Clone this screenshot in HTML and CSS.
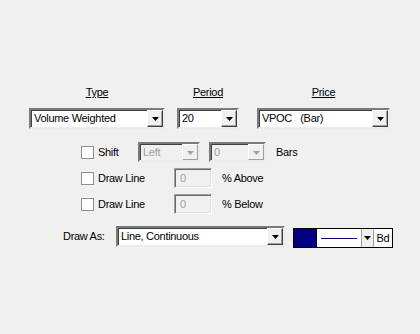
FILE: index.html
```html
<!DOCTYPE html>
<html>
<head>
<meta charset="utf-8">
<link rel="stylesheet" href="styles.css">
</head>
<body>
<div class="panel">
  <div class="top">
    <div class="col col-type">
      <div class="head">Type</div>
      <div class="combo w-type"><span class="val">Volume Weighted</span><span class="btn"><svg width="7" height="4" viewBox="0 0 7 4"><path d="M0 0H7L3.5 4Z" fill="#000"/></svg></span></div>
    </div>
    <div class="col col-period">
      <div class="head">Period</div>
      <div class="combo w-period"><span class="val">20</span><span class="btn"><svg width="7" height="4" viewBox="0 0 7 4"><path d="M0 0H7L3.5 4Z" fill="#000"/></svg></span></div>
    </div>
    <div class="col col-price">
      <div class="head">Price</div>
      <div class="combo w-price"><span class="val">VPOC&nbsp;&nbsp;&nbsp;(Bar)</span><span class="btn"><svg width="7" height="4" viewBox="0 0 7 4"><path d="M0 0H7L3.5 4Z" fill="#000"/></svg></span></div>
    </div>
  </div>

  <div class="row row-shift">
    <label class="chk w-shift"><span class="box"></span><span>Shift</span></label>
    <div class="combo small disabled w-left"><span class="val">Left</span><span class="btn"><svg width="7" height="4" viewBox="0 0 7 4"><path d="M0 0H7L3.5 4Z" fill="#a0a0a0"/></svg></span></div>
    <div class="combo small disabled w-zero"><span class="val">0</span><span class="btn"><svg width="7" height="4" viewBox="0 0 7 4"><path d="M0 0H7L3.5 4Z" fill="#a0a0a0"/></svg></span></div>
    <span class="txt">Bars</span>
  </div>

  <div class="row row-line1">
    <label class="chk w-line"><span class="box"></span><span>Draw Line</span></label>
    <div class="edit">0</div>
    <span class="txt">% Above</span>
  </div>

  <div class="row row-line2">
    <label class="chk w-line"><span class="box"></span><span>Draw Line</span></label>
    <div class="edit">0</div>
    <span class="txt">% Below</span>
  </div>

  <div class="row row-draw">
    <span class="txt w-drawas">Draw As:</span>
    <div class="combo w-draw"><span class="val">Line, Continuous</span><span class="btn"><svg width="7" height="4" viewBox="0 0 7 4"><path d="M0 0H7L3.5 4Z" fill="#000"/></svg></span></div>
    <div class="style">
      <span class="swatch"></span>
      <span class="linebox"><span class="ln"></span></span>
      <span class="sbtn"><svg width="7" height="4" viewBox="0 0 7 4"><path d="M0 0H7L3.5 4Z" fill="#000"/></svg></span>
      <span class="bd">Bd</span>
    </div>
  </div>
</div>
</body>
</html>
```

FILE: styles.css
```css
html, body {
  margin: 0;
  padding: 0;
}
body {
  width: 420px;
  height: 334px;
  background: #f0f0f0;
  font-family: "Liberation Sans", Arial, sans-serif;
  font-size: 11px;
  letter-spacing: -0.3px;
  color: #000;
  overflow: hidden;
}
.panel {
  padding-top: 86px;
}
.top {
  display: flex;
  padding-left: 29px;
}
.col {
  display: flex;
  flex-direction: column;
  align-items: center;
}
.col-period { margin-left: 12px; }
.col-price { margin-left: 18px; }
.head {
  height: 13px;
  line-height: 13px;
  text-decoration: underline;
  margin-bottom: 9px;
}
.combo {
  box-sizing: border-box;
  height: 21px;
  background: #fff;
  border-style: solid;
  border-width: 2px;
  border-color: #7a7a7a #ececec #ececec #7a7a7a;
  box-shadow: inset 1px 1px 0 #404040;
  display: flex;
  align-items: stretch;
  position: relative;
}
.combo .val {
  flex: 1;
  padding-left: 3px;
  line-height: 16px;
  white-space: nowrap;
  overflow: hidden;
}
.combo .btn {
  box-sizing: border-box;
  width: 16px;
  background: #f0f0f0;
  border-style: solid;
  border-width: 1px;
  border-color: #ffffff #404040 #404040 #ffffff;
  box-shadow: inset -1px -1px 0 #a0a0a0;
  display: flex;
  align-items: center;
  justify-content: center;
}
.combo .btn svg { display: block; margin-top: 1px; }
.w-type { width: 136px; }
.w-period { width: 62px; }
.w-price { width: 133px; }
.combo.small { height: 20px; }
.combo.disabled { background: #f0f0f0; color: #a0a0a0; }
.combo.disabled .btn { border-color: #ffffff #a0a0a0 #a0a0a0 #ffffff; box-shadow: none; }
.w-left { width: 62px; }
.w-zero { width: 57px; margin-left: 9px; }

.row {
  display: flex;
  align-items: center;
}
.row-shift { margin-top: 13px; height: 20px; padding-left: 81px; }
.row-line1 { margin-top: 6px; height: 20px; padding-left: 81px; }
.row-line2 { margin-top: 6px; height: 20px; padding-left: 81px; }
.row-draw { margin-top: 12px; height: 22px; padding-left: 63px; align-items: flex-start; }
.row-draw .w-drawas { line-height: 21px; }

.chk {
  display: flex;
  align-items: center;
  flex: none;
}
.chk .box {
  box-sizing: border-box;
  width: 13px;
  height: 13px;
  background: #fff;
  border: 1px solid #8e8f8f;
  margin-right: 4px;
}
.w-shift { width: 57px; }
.w-line { width: 93px; }
.txt { white-space: nowrap; }
.row-shift .txt { margin-left: 10px; }
.edit {
  box-sizing: border-box;
  width: 38px;
  height: 20px;
  background: #f0f0f0;
  color: #a0a0a0;
  border-style: solid;
  border-width: 1px;
  border-color: #a0a0a0 #ffffff #ffffff #a0a0a0;
  box-shadow: inset 1px 1px 0 #696969, inset -1px -1px 0 #e3e3e3;
  padding-left: 5px;
  line-height: 18px;
}
.edit + .txt { margin-left: 10px; }
.w-drawas { width: 53px; flex: none; }
.w-draw { width: 169px; height: 21px; }
.style {
  margin-left: 8px;
  margin-top: 2px;
  display: flex;
  height: 20px;
  box-sizing: border-box;
  border: 1px solid #000;
  background: #fff;
}
.swatch {
  width: 22px;
  background: #000080;
  border-right: 1px solid #000;
}
.linebox {
  width: 44px;
  display: flex;
  align-items: center;
  justify-content: center;
  border-right: 1px solid #a0a0a0;
}
.linebox .ln {
  width: 36px;
  height: 1px;
  background: #000080;
}
.sbtn {
  box-sizing: border-box;
  width: 12px;
  background: #f0f0f0;
  border-right: 1px solid #a0a0a0;
  display: flex;
  align-items: center;
  justify-content: center;
}
.bd {
  width: 18px;
  line-height: 18px;
  text-align: center;
}
```
